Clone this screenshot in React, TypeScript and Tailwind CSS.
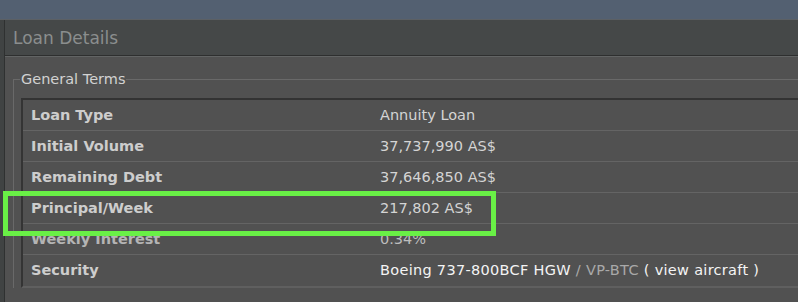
const rows = [
  { label: "Loan Type", value: "Annuity Loan" },
  { label: "Initial Volume", value: "37,737,990 AS$" },
  { label: "Remaining Debt", value: "37,646,850 AS$" },
  { label: "Principal/Week", value: "217,802 AS$" },
  { label: "Weekly Interest", value: "0.34%", dim: true },
];

export default function App() {
  return (
    <div className="relative h-[302px] w-[798px] overflow-hidden bg-[#515151] font-['DejaVu_Sans',sans-serif]">
      {/* window top bar */}
      <div className="h-[19px] bg-[#536071]" />
      <div className="h-px bg-[#5c6064]" />

      <div className="flex h-[282px]">
        {/* left strip */}
        <div className="w-[4px] bg-[#404343]" />
        <div className="w-px bg-[#2f3131]" />

        <div className="flex-1">
          {/* panel header */}
          <div className="flex h-[35px] items-center bg-[#454848] pl-[8px] pt-[2px] text-[17px] text-[#8b8e8e]">
            Loan Details
          </div>
          <div className="h-px bg-[#2e2f2f]" />
          <div className="h-px bg-[#626464]" />

          {/* general terms group */}
          <fieldset className="mt-[13px] ml-[8px] border-t border-l border-[#696969] pl-[7px] pt-[10px]">
            <legend className="-ml-px px-px text-[14.5px] leading-[18px] text-[#d2d2d2]">
              General Terms
            </legend>

            <div className="border-t-2 border-l-2 border-b-2 border-t-[#333333] border-l-[#343434] border-b-[#5f5f5f]">
              {rows.map((r) => (
                <div
                  key={r.label}
                  className="flex h-[31px] items-center border-b border-[#646464] pt-px text-[14.5px]"
                >
                  <div
                    className={`w-[357px] pl-[8px] font-bold ${r.dim ? "text-[#b4b4b4]" : "text-[#cdcdcd]"}`}
                  >
                    {r.label}
                  </div>
                  <div className={r.dim ? "text-[#bdbdbd]" : "text-[#d4d4d4]"}>{r.value}</div>
                </div>
              ))}
              <div className="flex h-[31px] items-center pt-px text-[14.5px]">
                <div className="w-[357px] pl-[8px] font-bold text-[#cdcdcd]">Security</div>
                <div className="whitespace-nowrap tracking-[0.3px] text-[#f4f4f4]">
                  Boeing 737-800BCF HGW <span className="text-[#a9a9a9]">/ VP-BTC</span> ( view aircraft )
                </div>
              </div>
            </div>
          </fieldset>
        </div>
      </div>

      {/* highlight box */}
      <div className="absolute top-[191px] left-[3px] h-[45px] w-[493px] border-[5px] border-[#69f046]" />
    </div>
  );
}
